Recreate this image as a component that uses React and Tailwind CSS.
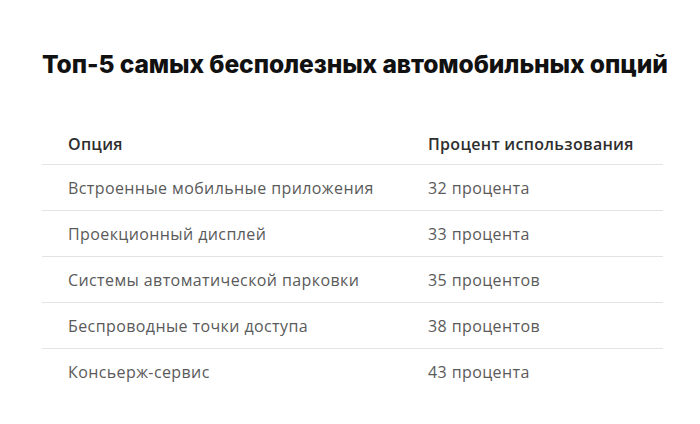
import React from "react";

const rows = [
  ["Встроенные мобильные приложения", "32 процента"],
  ["Проекционный дисплей", "33 процента"],
  ["Системы автоматической парковки", "35 процентов"],
  ["Беспроводные точки доступа", "38 процентов"],
  ["Консьерж-сервис", "43 процента"],
];

export default function App() {
  return (
    <div className="w-[700px] h-[424px] bg-white font-['Open_Sans',sans-serif] pt-[48px] pl-[42px]">
      <h1 className="text-[24.6px] leading-[32px] font-extrabold text-[#111] tracking-[-0.1px] font-['Inter',sans-serif]">
        Топ-5 самых бесполезных автомобильных опций
      </h1>

      <div className="w-[621px] mt-[43px]">
        {/* шапка */}
        <div className="grid grid-cols-[386px_1fr] h-[42px] items-center border-b border-[#e3e3e3] text-[16px] tracking-[0.3px] font-semibold text-[#2e2e2e]">
          <div className="pl-[26px]">Опция</div>
          <div>Процент использования</div>
        </div>

        {rows.map(([name, pct], i) => (
          <div
            key={name}
            className={
              "grid grid-cols-[386px_1fr] h-[46px] items-center text-[16px] tracking-[0.4px] text-[#5a5a5a] " +
              (i < rows.length - 1 ? "border-b border-[#e3e3e3]" : "")
            }
          >
            <div className="pl-[26px]">{name}</div>
            <div>{pct}</div>
          </div>
        ))}
      </div>
    </div>
  );
}
